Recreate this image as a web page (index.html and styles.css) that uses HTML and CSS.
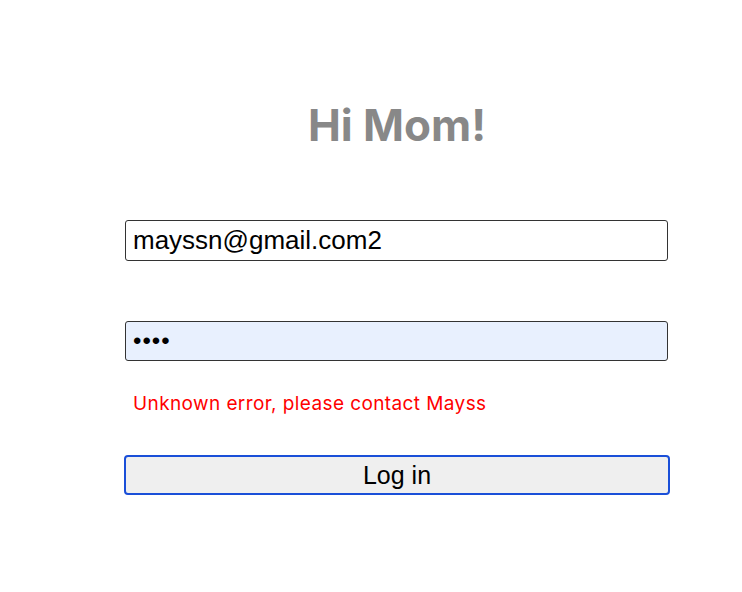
FILE: index.html
```html
<!DOCTYPE html>
<html>
<head>
<meta charset="utf-8">
<link rel="stylesheet" href="styles.css">
</head>
<body>
<div class="wrap">
  <h1 class="title">Hi Mom!</h1>
  <form class="form">
    <input class="field" type="email" value="mayssn@gmail.com2">
    <input class="field field-pw" type="password" value="abcd">
    <p class="error">Unknown error, please contact Mayss</p>
    <button class="btn" type="button">Log in</button>
  </form>
</div>
</body>
</html>
```
FILE: styles.css
```css
html, body {
  margin: 0;
  padding: 0;
  background: #fff;
}
.wrap {
  width: 544px;
  margin-left: 125px;
  padding-top: 96px;
  display: flex;
  flex-direction: column;
}
.title {
  margin: 0;
  text-align: center;
  font-family: Inter, "Noto Sans", sans-serif;
  font-weight: 700;
  font-size: 44px;
  line-height: 58px;
  color: #888888;
}
.form {
  display: flex;
  flex-direction: column;
  margin-top: 66px;
}
.field {
  box-sizing: border-box;
  width: 543px;
  height: 41px;
  margin: 0;
  padding: 0 7px;
  border: 1px solid #333;
  border-radius: 3px;
  font-family: "Liberation Sans", Arial, sans-serif;
  font-size: 26px;
  color: #000;
  background: #fff;
  outline: none;
}
.field-pw {
  margin-top: 60px;
  height: 40px;
  font-size: 24px;
  background: #e8f0fe;
  letter-spacing: 1px;
}
.error {
  margin: 30px 0 0 8px;
  font-family: Inter, "Noto Sans", sans-serif;
  font-size: 19px;
  line-height: 26px;
  letter-spacing: 0.4px;
  color: #ff0000;
}
.btn {
  box-sizing: border-box;
  width: 546px;
  height: 40px;
  margin: 38px 0 0 -1px;
  border: 2px solid #1a4fd8;
  border-radius: 4px;
  background: #efefef;
  font-family: "Liberation Sans", Arial, sans-serif;
  font-size: 25px;
  color: #000;
}
```
